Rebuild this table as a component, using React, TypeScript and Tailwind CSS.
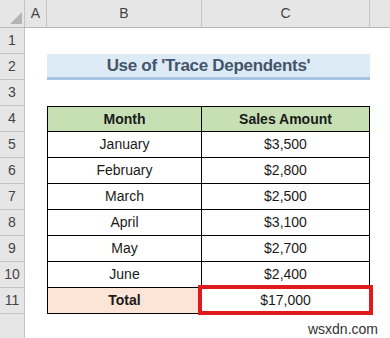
const rows = [
  { month: "January", amount: "$3,500" },
  { month: "February", amount: "$2,800" },
  { month: "March", amount: "$2,500" },
  { month: "April", amount: "$3,100" },
  { month: "May", amount: "$2,700" },
  { month: "June", amount: "$2,400" },
];

function RowHead({ n, h = "h-[26px]" }: { n?: number; h?: string }) {
  return (
    <div
      className={`${h} w-[25px] shrink-0 flex items-center justify-center border-r border-b border-[#c4c4c4] bg-[#e6e6e6] text-[14px] text-[#444]`}
    >
      {n}
    </div>
  );
}

export default function App() {
  const cell = "flex items-center justify-center text-[14px] text-[#1a1a1a]";

  return (
    <div
      className="w-[390px] h-[338px] overflow-hidden bg-white flex flex-col"
      style={{ fontFamily: '"Liberation Sans", Arial, sans-serif' }}
    >
      {/* column headers */}
      <div className="flex h-[28px] shrink-0 bg-[#e6e6e6] border-b border-[#b8b8b8] text-[14px] text-[#444]">
        <div className="w-[25px] shrink-0 border-r border-[#c4c4c4] relative">
          <svg className="absolute left-[10px] top-[12px]" width="12" height="12" viewBox="0 0 12 12">
            <polygon points="12,0 12,12 0,12" fill="#b4b4b4" />
          </svg>
        </div>
        <div className="w-[22px] shrink-0 border-r border-[#c4c4c4] flex items-center justify-center">A</div>
        <div className="w-[155px] shrink-0 border-r border-[#c4c4c4] flex items-center justify-center">B</div>
        <div className="w-[168px] shrink-0 border-r border-[#c4c4c4] flex items-center justify-center">C</div>
        <div className="flex-1" />
      </div>

      {/* row 1 */}
      <div className="flex">
        <RowHead n={1} />
      </div>

      {/* row 2 title */}
      <div className="flex">
        <RowHead n={2} />
        <div className="w-[22px] shrink-0" />
        <div className="w-[323px] shrink-0 h-[26px] bg-[#ddebf7] border-b-[3px] border-[#a7c4e2] flex items-center justify-center text-[17px] font-bold text-[#44546a] tracking-[-0.3px]">
          Use of 'Trace Dependents'
        </div>
      </div>

      {/* row 3 */}
      <div className="flex">
        <RowHead n={3} />
      </div>

      {/* row 4 header */}
      <div className="flex">
        <RowHead n={4} />
        <div className="w-[22px] shrink-0" />
        <div className={`${cell} w-[155px] h-[26px] bg-[#c6e0b4] border border-black font-bold`}>Month</div>
        <div className={`${cell} w-[168px] h-[26px] bg-[#c6e0b4] border-y border-r border-black font-bold`}>
          Sales Amount
        </div>
      </div>

      {rows.map((r, i) => (
        <div className="flex" key={r.month}>
          <RowHead n={i + 5} />
          <div className="w-[22px] shrink-0" />
          <div className={`${cell} w-[155px] h-[26px] border-x border-b border-black`}>{r.month}</div>
          <div className={`${cell} w-[168px] h-[26px] border-r border-b border-black`}>{r.amount}</div>
        </div>
      ))}

      {/* row 11 total */}
      <div className="flex">
        <RowHead n={11} />
        <div className="w-[22px] shrink-0" />
        <div className={`${cell} w-[155px] h-[26px] bg-[#fce4d6] border-x border-b border-black font-bold`}>Total</div>
        <div className={`${cell} w-[168px] h-[26px] border-r border-b border-black relative`}>
          $17,000
          <div className="absolute -left-[4px] -top-[3px] -right-[4px] -bottom-[2px] border-[4px] border-[#e0191c]" />
        </div>
      </div>

      {/* row 12 */}
      <div className="flex flex-1 relative">
        <div className="w-[25px] shrink-0 bg-[#e6e6e6] border-r border-[#c4c4c4]" />
        <div className="absolute right-[12px] top-[5px] text-[14px] text-[#333]">wsxdn.com</div>
      </div>
    </div>
  );
}
